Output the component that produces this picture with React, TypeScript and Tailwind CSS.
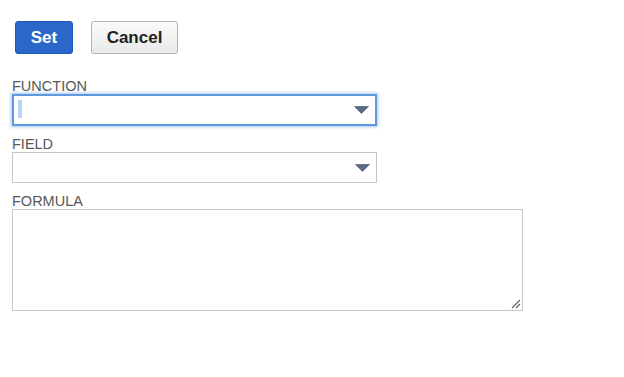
import React from "react";

function Caret() {
  return (
    <svg width="15" height="8" viewBox="0 0 15 8" className="absolute right-[6px] top-1/2 -translate-y-1/2">
      <path d="M0.5 0.5 H14.5 L7.5 7.5 Z" fill="#5b6b85" stroke="#5b6b85" strokeWidth="0.8" strokeLinejoin="round" />
    </svg>
  );
}

export default function App() {
  return (
    <div className="w-[624px] h-[377px] bg-white pl-[12px] pt-[21px]" style={{ fontFamily: '"Liberation Sans", Arial, sans-serif' }}>
      <div className="flex items-start gap-[18px] pl-[3px]">
        <button className="h-[33px] w-[58px] rounded-[3px] border border-[#1f59b8] bg-[#2b67c9] text-white font-bold text-[17px] leading-none">
          Set
        </button>
        <button className="h-[33px] w-[87px] rounded-[3px] border border-[#b4b4b4] bg-gradient-to-b from-[#fafafa] to-[#e9e9e9] text-[#222] font-bold text-[17px] leading-none">
          Cancel
        </button>
      </div>

      <div className="mt-[24px] flex flex-col">
        <div className="text-[14.5px] leading-[16px] text-[#585858]">FUNCTION</div>
        <div className="relative h-[32px] w-[365px] border-2 border-[#5f98dd] bg-white shadow-[0_0_3px_1px_rgba(95,152,221,0.55)]">
          <div className="absolute left-[4px] top-[4px] w-[4px] h-[18px] bg-[#b9d5f6]" />
          <Caret />
        </div>
      </div>

      <div className="mt-[10px] flex flex-col">
        <div className="text-[14.5px] leading-[16px] text-[#585858]">FIELD</div>
        <div className="relative h-[31px] w-[365px] border border-[#c6c6c6] bg-white">
          <Caret />
        </div>
      </div>

      <div className="mt-[10px] flex flex-col">
        <div className="text-[14.5px] leading-[16px] text-[#585858]">FORMULA</div>
        <div className="relative h-[102px] w-[511px] border border-[#c6c6c6] bg-white">
          <svg width="10" height="10" viewBox="0 0 10 10" className="absolute right-[1px] bottom-[1px]">
            <path d="M9 1 L1 9 M9 5 L5 9" stroke="#666" strokeWidth="1.2" />
          </svg>
        </div>
      </div>
    </div>
  );
}
